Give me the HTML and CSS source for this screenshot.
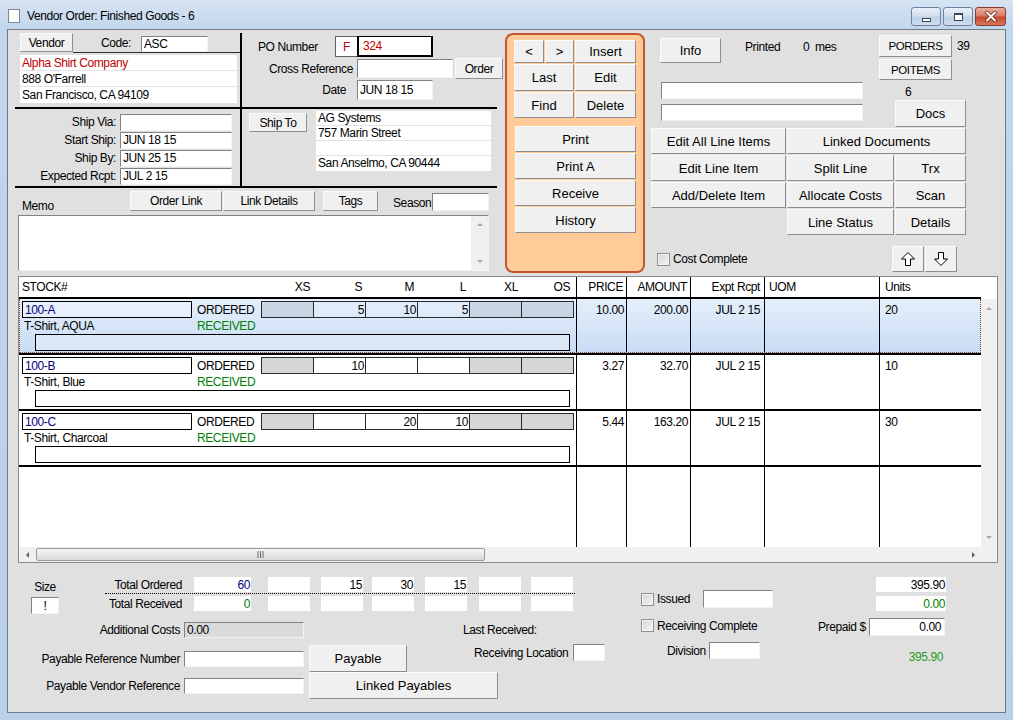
FILE: index.html
```html
<!DOCTYPE html>
<html>
<head>
<meta charset="utf-8">
<title>Vendor Order</title>
<link rel="stylesheet" href="styles.css">
</head>
<body>
<div class="window">
  <div class="titlebar">
    <div class="ticon"></div>
    <div class="ttext">Vendor Order: Finished Goods - 6</div>
    <div class="tbtns">
      <div class="tb"><span class="g-min"></span></div>
      <div class="tb"><span class="g-max"></span></div>
      <div class="tb tb-close">
        <svg width="12" height="11" viewBox="0 0 12 11"><path d="M2 1.5 L10 9.5 M10 1.5 L2 9.5" stroke="#6a2416" stroke-width="3.6" stroke-linecap="round"/><path d="M2 1.5 L10 9.5 M10 1.5 L2 9.5" stroke="#fff" stroke-width="2" stroke-linecap="round"/></svg>
      </div>
    </div>
  </div>

  <div class="content">
    <div class="top">
      <div class="lblock">
        <div class="lgrid">
          <div class="cell cA">
            <div class="vrow">
              <div class="btn bn vendor">Vendor</div>
              <div class="codegrp"><span class="codelbl">Code:</span><div class="inp code">ASC</div></div>
            </div>
            <div class="addr">
              <div class="red">Alpha Shirt Company</div>
              <div>888 O'Farrell</div>
              <div>San Francisco, CA 94109</div>
            </div>
          </div>
          <div class="cell cB">
            <div class="porow"><span class="polbl">PO Number</span><div class="fbox">F</div><div class="pobox">324</div></div>
            <div class="crow"><span class="rlbl w111">Cross Reference</span><div class="inp xref"></div><div class="btn bn order">Order</div></div>
            <div class="drow"><span class="rlbl w104">Date</span><div class="inp date">JUN 18 15</div></div>
          </div>
          <div class="cell cC">
            <div class="srow"><span class="slbl">Ship Via:</span><div class="inp sinp"></div></div>
            <div class="srow"><span class="slbl">Start Ship:</span><div class="inp sinp">JUN 18 15</div></div>
            <div class="srow"><span class="slbl">Ship By:</span><div class="inp sinp">JUN 25 15</div></div>
            <div class="srow"><span class="slbl">Expected Rcpt:</span><div class="inp sinp">JUL 2 15</div></div>
          </div>
          <div class="cell cD">
            <div class="btn bn shipto">Ship To</div>
            <div class="staddr">
              <div>AG Systems</div>
              <div>757 Marin Street</div>
              <div></div>
              <div>San Anselmo, CA 90444</div>
            </div>
          </div>
        </div>
        <div class="memorow">
          <span class="memolbl">Memo</span>
          <div class="btn bn olink">Order Link</div>
          <div class="btn bn ldet">Link Details</div>
          <div class="btn bn tags">Tags</div>
          <span class="seasonlbl">Season</span>
          <div class="inp season"></div>
        </div>
        <div class="memo">
          <div class="memotext"></div>
          <div class="vsb"><span class="tri-up"></span><span class="tri-dn"></span></div>
        </div>
      </div>

      <div class="orange">
        <div class="orow">
          <div class="btn ob w30 h23">&lt;</div>
          <div class="btn ob w29 h23">&gt;</div>
          <div class="btn ob w61 h23">Insert</div>
        </div>
        <div class="orow">
          <div class="btn ob w60 h27">Last</div>
          <div class="btn ob w61 h27">Edit</div>
        </div>
        <div class="orow">
          <div class="btn ob w60 h26">Find</div>
          <div class="btn ob w61 h26">Delete</div>
        </div>
        <div class="ocol">
          <div class="btn ob ow">Print</div>
          <div class="btn ob ow">Print A</div>
          <div class="btn ob ow">Receive</div>
          <div class="btn ob ow">History</div>
        </div>
      </div>

      <div class="rblock">
        <div class="rtop">
          <div class="rbl">
            <div class="r1">
              <div class="btn info">Info</div>
              <div class="printed"><span class="p1">Printed</span><span class="p2">0</span><span>mes</span></div>
            </div>
            <div class="inp in1"></div>
            <div class="inp in2"></div>
          </div>
          <div class="rbr">
            <div class="porrow"><div class="btn bn porders">PORDERS</div><span class="n39">39</span></div>
            <div class="btn bn poitems">POITEMS</div>
            <div class="six">6</div>
            <div class="btn docs">Docs</div>
          </div>
        </div>
        <div class="bgrid">
          <div class="btn">Edit All Line Items</div>
          <div class="btn span2">Linked Documents</div>
          <div class="btn">Edit Line Item</div>
          <div class="btn">Split Line</div>
          <div class="btn">Trx</div>
          <div class="btn">Add/Delete Item</div>
          <div class="btn">Allocate Costs</div>
          <div class="btn">Scan</div>
          <div class="btn col2">Line Status</div>
          <div class="btn">Details</div>
        </div>
        <div class="r4">
          <div class="ccgrp"><span class="chk"></span><span class="cclbl">Cost Complete</span></div>
          <div class="btn arrbtn"><svg width="16" height="16" viewBox="0 0 16 16"><path d="M8 1.5 L14.5 8 H10.5 V14.5 H5.5 V8 H1.5 Z" fill="#fff" stroke="#000" stroke-width="1"/></svg></div>
          <div class="btn arrbtn"><svg width="16" height="16" viewBox="0 0 16 16"><path d="M8 14.5 L14.5 8 H10.5 V1.5 H5.5 V8 H1.5 Z" fill="#fff" stroke="#000" stroke-width="1"/></svg></div>
        </div>
      </div>
    </div>

    <div class="grid">
      <div class="ghead">
        <div class="hcells">
          <div class="c0 hrow">
            <span class="h-stock">STOCK#</span>
            <span class="h-sz">XS</span><span class="h-sz">S</span><span class="h-sz">M</span><span class="h-sz">L</span><span class="h-sz">XL</span><span class="h-sz">OS</span>
          </div>
          <div class="cv cprice hc"><span>PRICE</span></div>
          <div class="cv camt hc"><span>AMOUNT</span></div>
          <div class="cv cexp hc"><span>Expt Rcpt</span></div>
          <div class="cv cuom hc"><span>UOM</span></div>
          <div class="cv cunits hc"><span>Units</span></div>
        </div>
        <div class="hfill"></div>
      </div>
      <div class="gbody">
        <div class="rows">
          <div class="row sel">
            <div class="c0">
              <div class="l1">
                <div class="stk">100-A</div><span class="ord">ORDERED</span>
                <div class="sizes"><span class="sc g"></span><span class="sc">5</span><span class="sc">10</span><span class="sc">5</span><span class="sc g"></span><span class="sc g"></span></div>
              </div>
              <div class="l2"><span class="desc">T-Shirt, AQUA</span><span class="rec">RECEIVED</span></div>
              <div class="note"></div>
            </div>
            <div class="cv cprice"><span>10.00</span></div>
            <div class="cv camt"><span>200.00</span></div>
            <div class="cv cexp"><span>JUL 2 15</span></div>
            <div class="cv cuom"><span></span></div>
            <div class="cv cunits"><span>20</span></div>
          </div>
          <div class="row">
            <div class="c0">
              <div class="l1">
                <div class="stk">100-B</div><span class="ord">ORDERED</span>
                <div class="sizes"><span class="sc g"></span><span class="sc">10</span><span class="sc"></span><span class="sc"></span><span class="sc g"></span><span class="sc g"></span></div>
              </div>
              <div class="l2"><span class="desc">T-Shirt, Blue</span><span class="rec">RECEIVED</span></div>
              <div class="note"></div>
            </div>
            <div class="cv cprice"><span>3.27</span></div>
            <div class="cv camt"><span>32.70</span></div>
            <div class="cv cexp"><span>JUL 2 15</span></div>
            <div class="cv cuom"><span></span></div>
            <div class="cv cunits"><span>10</span></div>
          </div>
          <div class="row">
            <div class="c0">
              <div class="l1">
                <div class="stk">100-C</div><span class="ord">ORDERED</span>
                <div class="sizes"><span class="sc g"></span><span class="sc"></span><span class="sc">20</span><span class="sc">10</span><span class="sc g"></span><span class="sc g"></span></div>
              </div>
              <div class="l2"><span class="desc">T-Shirt, Charcoal</span><span class="rec">RECEIVED</span></div>
              <div class="note"></div>
            </div>
            <div class="cv cprice"><span>5.44</span></div>
            <div class="cv camt"><span>163.20</span></div>
            <div class="cv cexp"><span>JUL 2 15</span></div>
            <div class="cv cuom"><span></span></div>
            <div class="cv cunits"><span>30</span></div>
          </div>
          <div class="rfill">
            <div class="c0"></div>
            <div class="cv cprice"></div>
            <div class="cv camt"></div>
            <div class="cv cexp"></div>
            <div class="cv cuom"></div>
            <div class="cv cunits"></div>
          </div>
        </div>
        <div class="vsc"><span class="tri-up"></span><span class="tri-dn"></span></div>
      </div>
      <div class="hscroll">
        <div class="htrack">
          <span class="harr"><span class="tri-lt"></span></span>
          <div class="hthumb"><svg width="7" height="7" viewBox="0 0 7 7"><path d="M1 0 V7 M3.5 0 V7 M6 0 V7" stroke="#6a6a6a" stroke-width="1"/></svg></div>
          <span class="harr rgt"><span class="tri-rt"></span></span>
        </div>
        <div class="hcorner"></div>
      </div>
    </div>

    <div class="bottom">
      <div class="bleft">
        <div class="totals">
          <div class="sizecol">
            <span class="sizelbl">Size</span>
            <div class="inp sizein">!</div>
          </div>
          <div class="tblock">
            <div class="trow">
              <span class="tlbl">Total Ordered</span>
              <span class="tbox tb1 navy">60</span><span class="tbox tb2"></span><span class="tbox tb3">15</span><span class="tbox tb4">30</span><span class="tbox tb5">15</span><span class="tbox tb6"></span><span class="tbox tb7"></span>
            </div>
            <div class="tdots"></div>
            <div class="trow trow2">
              <span class="tlbl">Total Received</span>
              <span class="tbox tb1 green">0</span><span class="tbox tb2"></span><span class="tbox tb3"></span><span class="tbox tb4"></span><span class="tbox tb5"></span><span class="tbox tb6"></span><span class="tbox tb7"></span>
            </div>
          </div>
        </div>
        <div class="payables">
          <div class="prow prow1">
            <span class="plbl">Additional Costs</span>
            <div class="inp pin addc">0.00</div>
            <span class="lastrec">Last Received:</span>
          </div>
          <div class="prow prow2">
            <span class="plbl">Payable Reference Number</span>
            <div class="inp pin"></div>
            <div class="btn payable">Payable</div>
            <span class="rcvlbl">Receiving Location</span>
            <div class="inp rcvin"></div>
          </div>
          <div class="prow prow3">
            <span class="plbl">Payable Vendor Reference</span>
            <div class="inp pin"></div>
            <div class="btn linkpay">Linked Payables</div>
          </div>
        </div>
      </div>
      <div class="bmid">
        <div class="issrow"><span class="chk"></span><span class="isslbl">Issued</span><div class="inp issin"></div></div>
        <div class="rcrow"><span class="chk"></span><span class="isslbl2">Receiving Complete</span></div>
        <div class="divrow"><span class="divlbl">Division</span><div class="inp divin"></div></div>
      </div>
      <div class="bright">
        <div class="rbox rb1">395.90</div>
        <div class="rbox rb2 green">0.00</div>
        <div class="prepaid"><span class="prelbl">Prepaid $</span><div class="inp prein">0.00</div></div>
        <div class="gtot">395.90</div>
      </div>
    </div>
  </div>
</div>
</body>
</html>
```

FILE: styles.css
```css
* { box-sizing: border-box; }
html, body { margin: 0; padding: 0; }
body {
  width: 1013px; height: 720px; overflow: hidden;
  font-family: "Liberation Sans", Arial, sans-serif;
  font-size: 12px; letter-spacing: -0.4px; color: #000; background: #b9d1ea;
}
.content * { flex-shrink: 0; white-space: nowrap; }

.window {
  width: 1013px; height: 720px;
  background: linear-gradient(to bottom, #d6e4f3 0, #c2d6ec 29px, #b9d0e9 100%);
  padding: 0 7px 7px 7px;
}
.titlebar { height: 29px; display: flex; align-items: center; }
.ticon { width: 12px; height: 14px; background: #fff; border: 1px solid #7b8898; margin-left: 1px; margin-top: 3px; }
.ttext { margin-left: 7px; margin-top: 3px; font-size: 12px; letter-spacing: -0.4px; }
.tbtns { margin-left: auto; display: flex; gap: 2px; align-self: flex-start; margin-top: 7px; }
.tb {
  width: 30px; height: 19px; border: 1px solid #6e819c; border-radius: 3px;
  background: linear-gradient(#e9f0f8, #d2dfee 48%, #bccfe6 52%, #cfdef0);
  display: flex; align-items: center; justify-content: center;
}
.tb-close { width: 31px; border-color: #8b3a2b; background: linear-gradient(#eab0a2, #d97a64 48%, #c8462e 52%, #d9765c); }
.g-min { width: 9px; height: 4px; border: 1px solid #3a4558; background: #fff; margin-top: 6px; }
.g-max { width: 9px; height: 8px; border: 1px solid #3a4558; border-top-width: 2px; background: #fff; }

.content { height: 684px; border: 1px solid #6c7a8a; background: #e0e0e0; }

/* generic controls */
.btn {
  background: #f0f0f0;
  border: 1px solid; border-color: #fbfbfb #8e8e8e #8e8e8e #fbfbfb;
  display: flex; align-items: center; justify-content: center;
  font-size: 13px; letter-spacing: 0;
}
.bn { font-size: 12px; letter-spacing: -0.4px; }
.inp {
  background: #fff;
  border: 1px solid; border-color: #828282 #f2f2f2 #f2f2f2 #828282;
  display: flex; align-items: center; padding-left: 2px;
  overflow: hidden;
}
.red { color: #c00000; }
.navy { color: #000080; }
.green { color: #008000; }
.chk {
  display: inline-block; width: 13px; height: 13px;
  border: 1px solid #8e8f8f;
  background: linear-gradient(135deg, #d4d4d4, #f7f7f7);
  box-shadow: inset 0 0 0 1px #f4f4f4;
}
.tri-up { width: 0; height: 0; border-left: 3px solid transparent; border-right: 3px solid transparent; border-bottom: 3px solid #a6a6a6; }
.tri-dn { width: 0; height: 0; border-left: 3px solid transparent; border-right: 3px solid transparent; border-top: 3px solid #a6a6a6; }
.tri-lt { width: 0; height: 0; border-top: 3px solid transparent; border-bottom: 3px solid transparent; border-right: 3px solid #606060; }
.tri-rt { width: 0; height: 0; border-top: 3px solid transparent; border-bottom: 3px solid transparent; border-left: 3px solid #606060; }

/* top */
.top { display: flex; align-items: flex-start; height: 246px; }
.lblock { margin-left: 7px; margin-top: 3px; width: 482px; }
.lgrid { display: grid; grid-template-columns: 225px 257px; grid-template-rows: 76px 79px; }
.cA { border-bottom: 2px solid #000; }
.cB { border-left: 2px solid #000; border-bottom: 2px solid #000; }
.cC { border-bottom: 2px solid #000; padding-top: 4px; }
.cD { border-left: 2px solid #000; border-bottom: 2px solid #000; display: flex; align-items: flex-start; }

.vrow { display: flex; align-items: flex-start; height: 20px; }
.vendor { margin-left: 5px; width: 53px; height: 19px; }
.codegrp { width: 167px; height: 20px; border-bottom: 1px solid #2c2c2c; display: flex; align-items: flex-end; }
.codelbl { margin-left: 28px; width: 40px; align-self: center; }
.code { width: 67px; height: 16px; }
.addr { margin: 2px 0 0 5px; width: 217px; background: #fff; }
.addr div { height: 16px; line-height: 16px; border-bottom: 1px solid #e2e2e2; padding-left: 2px; }
.addr div:last-child { border-bottom: 0; }

.porow { margin-top: 3px; display: flex; align-items: center; height: 21px; }
.polbl { margin-left: 16px; width: 77px; }
.fbox { width: 22px; height: 21px; border: 1px solid #606060; border-right: 0; background: #fff; color: #c00000; display: flex; align-items: center; justify-content: center; }
.pobox { width: 76px; height: 21px; border: 1px solid #000; border-width: 1px 2px 2px 2px; background: #fff; color: #c00000; padding-left: 4px; display: flex; align-items: center; }
.crow { margin-top: 1px; display: flex; align-items: center; height: 21px; }
.rlbl { text-align: right; }
.w111 { width: 111px; }
.w104 { width: 104px; }
.xref { margin-left: 4px; width: 96px; height: 19px; }
.order { margin-left: 2px; width: 48px; height: 21px; }
.drow { margin-top: 1px; display: flex; align-items: center; height: 20px; }
.date { margin-left: 11px; width: 76px; height: 20px; }

.srow { display: flex; align-items: center; height: 18px; }
.slbl { width: 101px; text-align: right; }
.sinp { margin-left: 4px; width: 112px; height: 17px; }

.shipto { margin: 4px 0 0 7px; width: 58px; height: 19px; }
.staddr { margin: 2px 0 0 9px; width: 175px; background: #fff; }
.staddr div { height: 15px; line-height: 15px; border-bottom: 1px solid #e2e2e2; padding-left: 2px; }
.staddr div:last-child { border-bottom: 0; }

.memorow { margin-top: 3px; display: flex; align-items: flex-start; height: 20px; }
.memolbl { margin-left: 7px; width: 108px; margin-top: 8px; line-height: 14px; }
.olink { width: 92px; height: 20px; }
.ldet { margin-left: 1px; width: 92px; height: 20px; }
.tags { margin-left: 8px; width: 55px; height: 20px; }
.seasonlbl { margin-left: 15px; width: 39px; margin-top: 5px; line-height: 14px; }
.season { width: 57px; height: 18px; margin-top: 2px; }
.memo {
  margin: 4px 0 0 3px; width: 471px; height: 56px; background: #fff;
  border: 1px solid; border-color: #828282 #f2f2f2 #f2f2f2 #828282; display: flex;
}
.memotext { flex: 1 1 auto; }
.vsb { width: 17px; background: #f0f0f0; display: flex; flex-direction: column; justify-content: space-between; align-items: center; padding: 7px 0; }

/* orange panel */
.orange {
  margin-left: 8px; margin-top: 3px; width: 140px; height: 240px;
  border: 2px solid #c4552d; border-radius: 8px; background: #ffcc99;
  padding: 5px 0 0 7px;
}
.orow { display: flex; gap: 1px; margin-bottom: 1px; }
.w29 { width: 29px; } .w30 { width: 30px; } .w60 { width: 60px; } .w61 { width: 61px; }
.h23 { height: 23px; } .h26 { height: 26px; } .h27 { height: 27px; }
.ocol { margin: 8px 0 0 1px; display: flex; flex-direction: column; gap: 1px; }
.ow { width: 121px; height: 26px; }

/* right block */
.rblock { margin-left: 6px; margin-top: 3px; width: 330px; }
.rtop { display: flex; height: 94px; }
.rbl { width: 215px; }
.r1 { display: flex; align-items: flex-start; }
.info { margin-left: 9px; margin-top: 5px; width: 61px; height: 25px; }
.printed { margin-left: 24px; margin-top: 7px; display: flex; line-height: 14px; }
.p1 { width: 58px; }
.p2 { width: 12px; }
.in1 { margin: 19px 0 0 10px; width: 202px; height: 17px; }
.in2 { margin: 5px 0 0 10px; width: 202px; height: 17px; }
.rbr { display: flex; flex-direction: column; }
.porrow { display: flex; align-items: center; margin-top: 2px; }
.porders { margin-left: 13px; width: 73px; height: 22px; font-size: 11.5px; }
.n39 { margin-left: 5px; }
.poitems { margin: 2px 0 0 13px; width: 73px; height: 21px; font-size: 11.5px; }
.six { margin: 5px 0 0 39px; line-height: 14px; }
.docs { margin: 1px 0 0 29px; width: 71px; height: 27px; }
.bgrid { display: grid; grid-template-columns: 135px 107px 71px; grid-auto-rows: 26px; gap: 1px; margin-top: 1px; }
.span2 { grid-column: span 2; }
.col2 { grid-column: 2; }
.r4 { display: flex; align-items: center; margin-top: 11px; height: 26px; }
.ccgrp { width: 241px; display: flex; align-items: center; }
.ccgrp .chk { margin-left: 6px; }
.cclbl { margin-left: 3px; }
.arrbtn { width: 32px; height: 26px; margin-right: 1px; }

/* grid */
.grid {
  margin-left: 10px; width: 980px; height: 287px;
  border: 1px solid #8a8a8a; background: #fff;
  display: flex; flex-direction: column;
}
.ghead { display: flex; height: 22px; }
.hcells { width: 962px; display: flex; border-bottom: 2px solid #000; }
.hfill { flex: 1 1 auto; }
.c0 { width: 557px; }
.hrow { display: flex; align-items: center; }
.h-stock { width: 242px; padding-left: 3px; }
.h-sz { width: 52px; text-align: right; padding-right: 3px; }
.cv { border-left: 1px solid #000; }
.cv span { display: block; margin-top: 3px; line-height: 16px; }
.hc { display: flex; align-items: center; }
.hc span { margin-top: 0; flex: 1 1 auto; }
.cprice { width: 50px; text-align: right; padding-right: 2px; }
.camt { width: 64px; text-align: right; padding-right: 2px; }
.cexp { width: 74px; text-align: right; padding-right: 4px; }
.cuom { width: 115px; padding-left: 4px; }
.cunits { width: 102px; padding-left: 5px; }
.hc.cprice, .hc.camt { padding-right: 3px; }

.gbody { flex: 1 1 auto; display: flex; min-height: 0; }
.rows { width: 962px; display: flex; flex-direction: column; }
.row { display: flex; height: 56px; border-bottom: 2px solid #000; }
.row.sel { position: relative; background: linear-gradient(#e5effb, #c8dcf4); }
.row.sel::after {
  content: ""; position: absolute; left: 0; right: 0; top: 0; bottom: 0;
  border: 1px dotted #7b4a24; border-top: 0; pointer-events: none;
}
.l1 { display: flex; margin-top: 2px; height: 17px; }
.stk { margin-left: 3px; width: 170px; height: 17px; border: 1px solid #000; color: #000080; padding-left: 2px; display: flex; align-items: center; background: #fff; }
.ord { margin-left: 5px; width: 64px; display: flex; align-items: center; }
.sizes { display: flex; height: 17px; border: 1px solid #2a2a2a; border-right: 0; }
.sc { width: 52px; border-right: 1px solid #2a2a2a; display: flex; align-items: center; justify-content: flex-end; padding-right: 1px; background: #fff; }
.sc.g { background: #d6d6d6; }
.l2 { display: flex; height: 16px; align-items: center; }
.desc { margin-left: 5px; width: 173px; }
.rec { color: #008000; }
.note { margin-left: 16px; width: 535px; height: 17px; border: 1px solid #000; background: #fff; }
.sel .stk, .sel .note { background: rgba(255, 255, 255, 0.25); }
.sel .sc { background: transparent; }
.sel .sc.g { background: rgba(110, 125, 140, 0.2); }
.rfill { flex: 1 1 auto; display: flex; }
.vsc { flex: 1 1 auto; background: #f0f0f0; display: flex; flex-direction: column; justify-content: space-between; align-items: center; padding: 8px 0; }

.hscroll { height: 15px; display: flex; background: #f0f0f0; }
.htrack { width: 962px; display: flex; align-items: center; }
.harr { width: 16px; display: flex; justify-content: center; }
.harr.rgt { margin-left: auto; }
.hthumb {
  margin-left: 1px; width: 449px; height: 13px;
  border: 1px solid #9b9b9b; border-radius: 2px;
  background: linear-gradient(#f5f5f5, #dadada);
  display: flex; align-items: center; justify-content: center;
}
.hcorner { flex: 1 1 auto; }

/* bottom */
.bottom { display: flex; align-items: flex-start; }
.bleft { width: 625px; }
.totals { display: flex; margin-top: 14px; }
.sizecol { margin-left: 23px; width: 28px; display: flex; flex-direction: column; align-items: center; }
.sizelbl { margin-top: 3px; line-height: 14px; }
.sizein { margin-top: 3px; width: 28px; height: 17px; justify-content: center; padding: 0; }
.tblock { display: flex; flex-direction: column; }
.trow { display: flex; height: 15px; align-items: center; }
.trow2 { margin-top: 2px; }
.tlbl { width: 123px; text-align: right; }
.tbox { height: 15px; width: 42px; background: #fff; display: flex; align-items: center; justify-content: flex-end; padding-right: 1px; }
.tb1 { margin-left: 12px; width: 57px; }
.tb2 { margin-left: 17px; }
.tb3 { margin-left: 11px; }
.tb4 { margin-left: 9px; }
.tb5 { margin-left: 11px; }
.tb6 { margin-left: 12px; }
.tb7 { margin-left: 10px; }
.tdots { margin: 1px 0 0 46px; width: 470px; height: 0; border-top: 1px dotted #000; }

.payables { margin-top: 8px; }
.prow { display: flex; align-items: center; }
.prow1 { height: 16px; }
.prow2 { margin-top: 7px; height: 27px; }
.prow3 { height: 27px; }
.plbl { width: 172px; text-align: right; }
.pin { margin-left: 4px; width: 120px; height: 16px; }
.addc { background: #dadada; }
.lastrec { margin-left: 159px; }
.payable { margin-left: 5px; width: 98px; height: 27px; }
.rcvlbl { margin-left: 67px; width: 99px; align-self: flex-start; margin-top: 1px; line-height: 14px; }
.rcvin { width: 32px; height: 17px; align-self: flex-start; margin-top: -1px; }
.linkpay { margin-left: 5px; width: 189px; height: 27px; }

.bmid { width: 139px; margin-left: 8px; }
.issrow { margin-top: 27px; display: flex; align-items: center; height: 18px; }
.isslbl { margin-left: 3px; width: 43px; }
.isslbl2 { margin-left: 3px; }
.issin { margin-left: 3px; width: 70px; height: 18px; }
.rcrow { margin-top: 11px; display: flex; align-items: center; height: 13px; }
.divrow { margin-top: 10px; display: flex; align-items: center; height: 17px; }
.divlbl { margin-left: 26px; width: 42px; }
.divin { width: 51px; height: 17px; }

.bright { margin-left: 38px; width: 128px; }
.rbox { margin-left: 58px; width: 70px; height: 15px; background: #fff; display: flex; align-items: center; justify-content: flex-end; padding-right: 1px; }
.rb1 { margin-top: 14px; }
.rb2 { margin-top: 4px; }
.prepaid { margin-top: 7px; display: flex; align-items: center; height: 18px; }
.prelbl { width: 51px; }
.prein { width: 76px; height: 18px; justify-content: flex-end; padding-right: 3px; }
.gtot { margin-top: 14px; width: 125px; text-align: right; line-height: 14px; color: #1f9e1f; }
```
